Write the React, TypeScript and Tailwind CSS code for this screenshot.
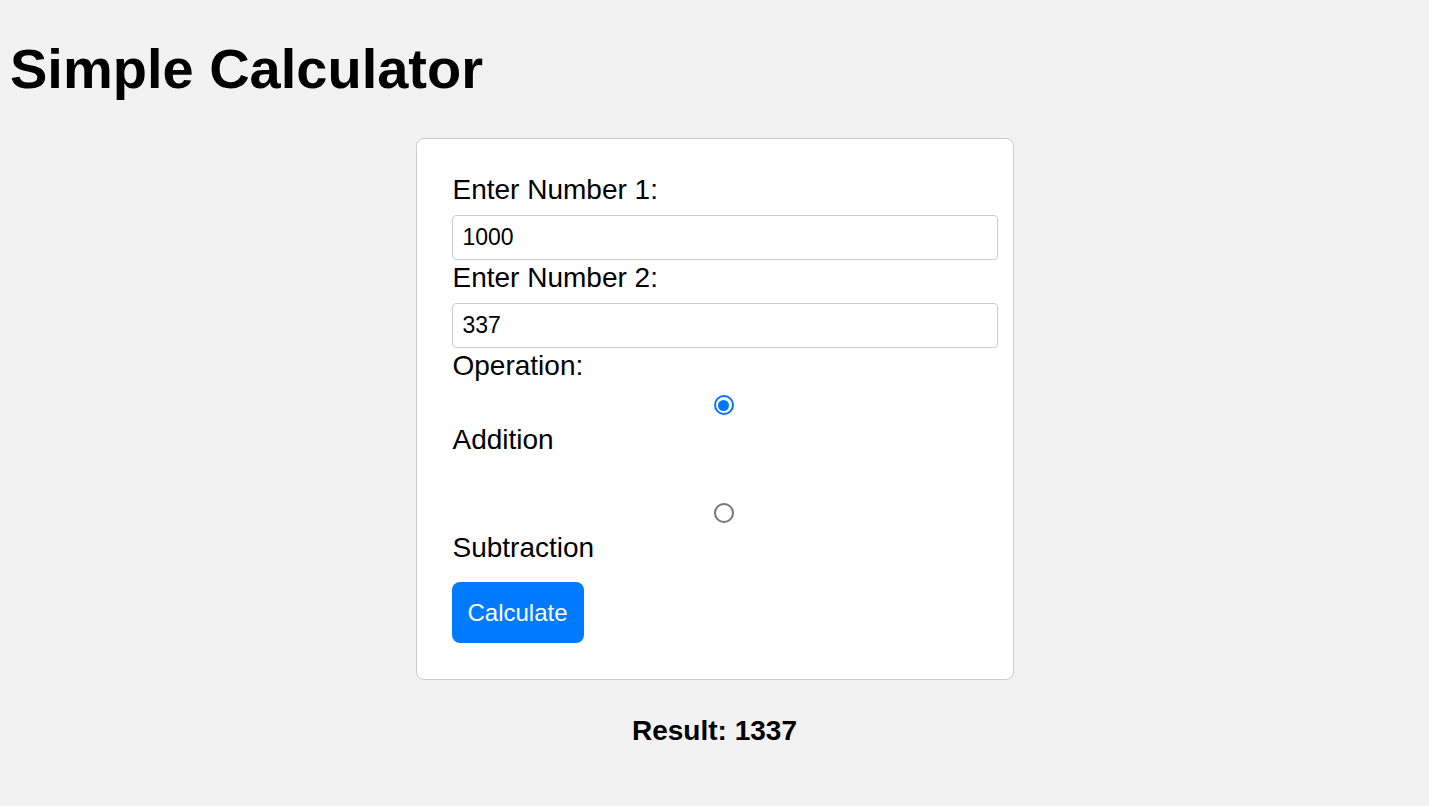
import React, { useState } from 'react';

const font = { fontFamily: '"Liberation Sans", Arial, sans-serif' };

type Op = 'add' | 'sub';

function Radio({ checked, onSelect }: { checked: boolean; onSelect: () => void }) {
  return (
    <span className="relative inline-flex w-[20px] h-[20px]">
      <input
        type="radio"
        name="op"
        checked={checked}
        onChange={onSelect}
        className={`appearance-none m-0 w-[20px] h-[20px] rounded-full border-2 bg-white ${
          checked ? 'border-[#0075ff]' : 'border-[#767676]'
        }`}
      />
      {checked && (
        <span className="pointer-events-none absolute left-[4.5px] top-[4.5px] w-[11px] h-[11px] rounded-full bg-[#0075ff]" />
      )}
    </span>
  );
}

export default function App() {
  const [a, setA] = useState('1000');
  const [b, setB] = useState('337');
  const [op, setOp] = useState<Op>('add');
  const [result, setResult] = useState<number>(1337);

  const calculate = () => {
    const x = parseFloat(a) || 0;
    const y = parseFloat(b) || 0;
    setResult(op === 'add' ? x + y : x - y);
  };

  return (
    <div className="min-h-screen bg-[#f2f2f2] text-black overflow-hidden" style={font}>
      <h1 className="my-[37px] pl-[10px] text-[56px] leading-[64px] font-bold">Simple Calculator</h1>

      <div className="mx-auto w-[598px] bg-white border border-[#cccccc] rounded-[8px] pt-[35px] pl-[35px] pb-[36px]">
        <label className="block pl-px text-[28px] leading-[32px] mb-[9px]">Enter Number 1:</label>
        <input
          type="text"
          value={a}
          onChange={e => setA(e.target.value)}
          className="block w-[546px] h-[45px] border border-[#cccccc] rounded-[4px] pl-[10px] text-[23px] outline-none"
        />

        <label className="block pl-px mt-[2px] text-[28px] leading-[32px] mb-[9px]">Enter Number 2:</label>
        <input
          type="text"
          value={b}
          onChange={e => setB(e.target.value)}
          className="block w-[546px] h-[45px] border border-[#cccccc] rounded-[4px] pl-[10px] text-[23px] outline-none"
        />

        <label className="block pl-px mt-[2px] text-[28px] leading-[32px]">Operation:</label>

        <div className="flex justify-center w-[544px] mt-[13px] h-[20px]">
          <Radio checked={op === 'add'} onSelect={() => setOp('add')} />
        </div>
        <label className="block pl-px mt-[9px] text-[28px] leading-[32px]">Addition</label>

        <div className="flex justify-center w-[544px] mt-[47px] h-[20px]">
          <Radio checked={op === 'sub'} onSelect={() => setOp('sub')} />
        </div>
        <label className="block pl-px mt-[9px] text-[28px] leading-[32px]">Subtraction</label>

        <button
          onClick={calculate}
          className="mt-[18px] w-[132px] h-[61px] bg-[#007bff] text-white text-[24px] rounded-[8px]"
        >
          Calculate
        </button>
      </div>

      <div className="mt-[35px] text-center text-[28px] leading-[31px] font-bold">Result: {result}</div>
    </div>
  );
}
